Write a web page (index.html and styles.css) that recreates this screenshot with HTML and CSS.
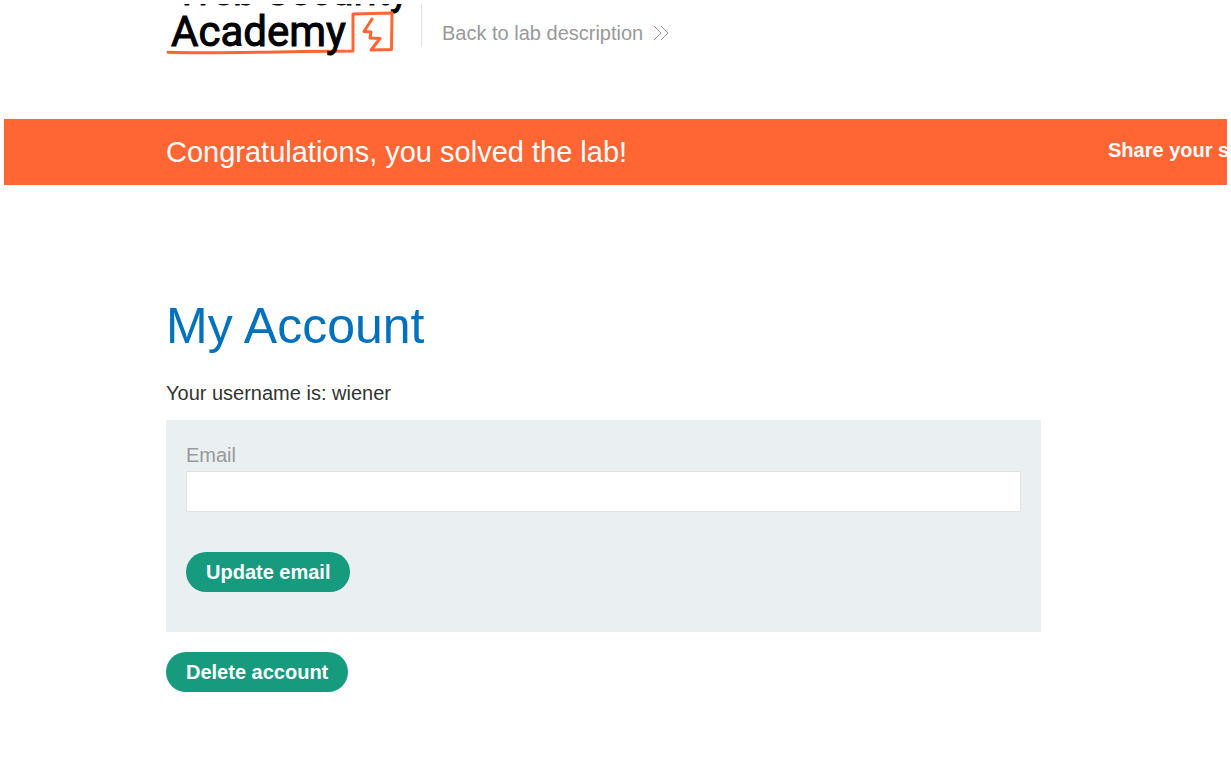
FILE: index.html
```html
<!DOCTYPE html>
<html lang="en">
<head>
<meta charset="utf-8">
<title>My Account</title>
<link rel="stylesheet" href="styles.css">
</head>
<body>
<div class="page">
  <header class="header">
    <svg class="logo" width="246" height="56" viewBox="4 0 246 56" role="img" aria-label="Web Security Academy">
      <text class="logo-text logo-top" x="15" y="1">Web Security</text>
      <path d="M6 48.300 C60 50 130 47 191 47 L191 10 L230 9 L229.500 45.500 L209 46 L218 34.500 L208 34 L209 28 L202 27.500 L210 15" fill="none" stroke="#ff6633" stroke-width="3" stroke-linejoin="round" stroke-linecap="round"/>
      <text class="logo-text" x="9" y="42">Academy</text>
    </svg>
    <a class="back" href="#">Back to lab description
      <svg class="chevrons" width="16" height="16" viewBox="0 0 16 16" aria-hidden="true"><path d="M1 1L8 8L1 15M8 1L15 8L8 15" fill="none" stroke="#999" stroke-width="1"/></svg>
    </a>
  </header>
  <section class="banner">
    <h4 class="banner-title">Congratulations, you solved the lab!</h4>
    <span class="share">Share your skills!</span>
  </section>
  <main class="content">
    <h1 class="title">My Account</h1>
    <p class="username">Your username is: wiener</p>
    <form class="form">
      <label class="label" for="email">Email</label>
      <input class="input" id="email" type="email">
      <button class="button" type="button">Update email</button>
    </form>
    <button class="button" type="button">Delete account</button>
  </main>
</div>
</body>
</html>
```
FILE: styles.css
```css
* { box-sizing: border-box; }
body {
  margin: 0;
  padding: 4px;
  background: #fff;
  color: #333332;
  font-family: "Liberation Sans", Arial, sans-serif;
  font-size: 20px;
  line-height: 24px;
}
.page { overflow: hidden; }
.header {
  display: flex;
  align-items: flex-start;
  gap: 9px;
  padding: 0 162px 59px;
}
.logo { flex: none; display: block; }
.logo-text {
  font-family: Roboto, sans-serif;
  font-size: 42px;
  fill: #000;
  stroke: #000;
  stroke-width: 1px;
}
.logo-top { font-size: 40px; }
.back {
  display: flex;
  align-items: center;
  gap: 10px;
  height: 43px;
  padding: 14px 0 0 20px;
  border-left: 1px solid #e2e2e2;
  color: #999;
  text-decoration: none;
  white-space: nowrap;
}
.banner {
  display: flex;
  align-items: center;
  height: 66px;
  padding-left: 162px;
  background: #ff6633;
  color: #fff;
  overflow: hidden;
  white-space: nowrap;
}
.banner-title {
  flex: 0 0 942px;
  margin: 0;
  font-size: 29px;
  font-weight: 400;
  line-height: 34px;
}
.share { flex: none; padding-bottom: 4px; font-weight: 700; }
.content { padding: 112px 0 60px 162px; }
.title {
  margin: 0 0 26px;
  color: #0071bc;
  font-size: 50px;
  font-weight: 400;
  line-height: 58px;
}
.username { margin: 0 0 15px; }
.form {
  display: flex;
  flex-direction: column;
  align-items: flex-start;
  max-width: 875px;
  margin-bottom: 20px;
  padding: 23px 20px 40px;
  background: #eaeff2;
}
.label { margin-bottom: 4px; color: #999; }
.input {
  width: 100%;
  height: 41px;
  margin-bottom: 40px;
  padding: 0 10px;
  border: 1px solid #e2e2e2;
  background: #fff;
  font: inherit;
}
.button {
  height: 40px;
  padding: 0 20px;
  border: 0;
  border-radius: 20px;
  background: #169b7f;
  color: #fff;
  font: inherit;
  font-weight: 700;
}
```
